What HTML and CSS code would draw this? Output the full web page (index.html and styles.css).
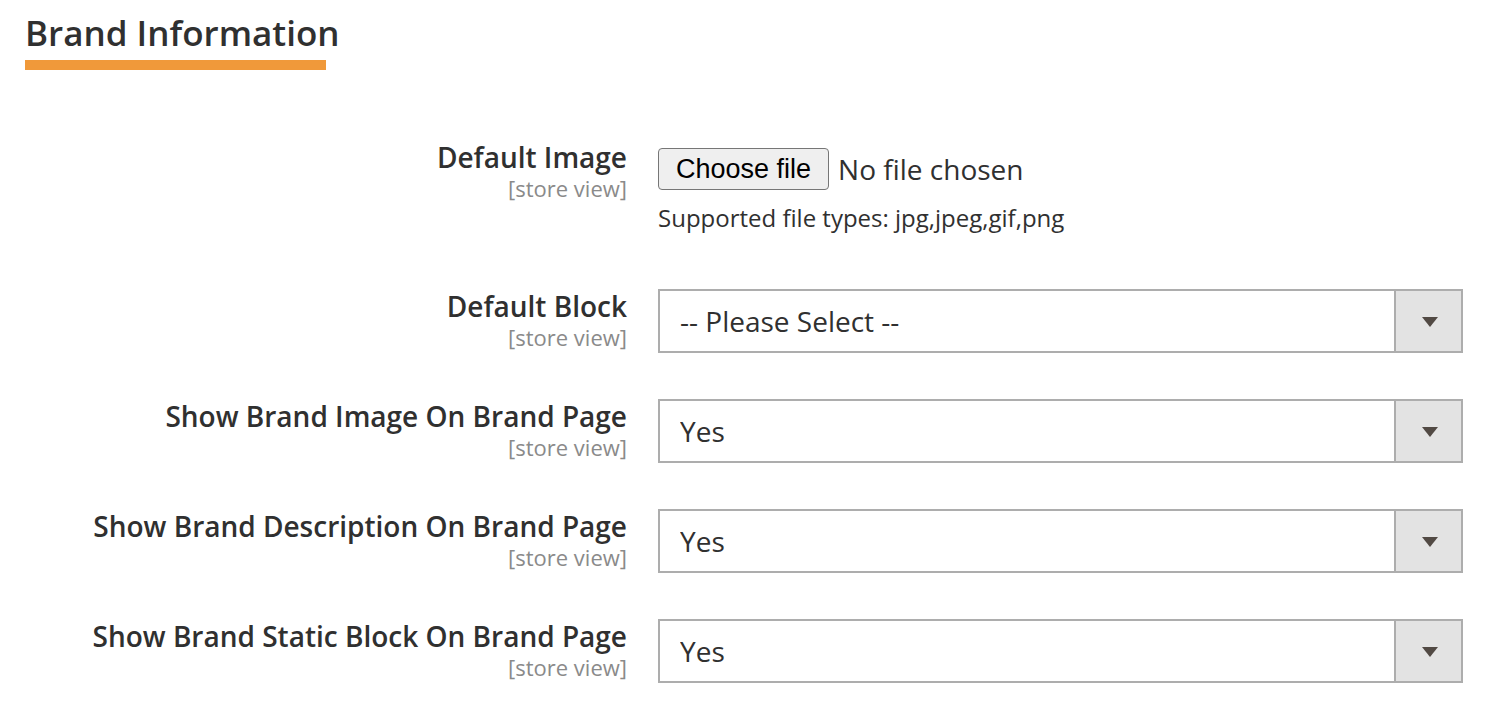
FILE: index.html
```html
<!DOCTYPE html>
<html lang="en">
<head>
    <meta charset="UTF-8">
    <meta name="viewport" content="width=device-width, initial-scale=1.0">
    <title>Brand Information</title>
    <link rel="stylesheet" href="styles.css">
</head>
<body>
    <div class="page">
        <!-- Section title -->
        <h1 class="section-title">Brand Information</h1>

        <form class="brand-form">
            <!-- Default Image -->
            <div class="field field-file">
                <div class="field-label">
                    <label for="default-image">Default Image</label>
                    <span class="scope">[store view]</span>
                </div>
                <div class="field-control">
                    <div class="file-row">
                        <input type="file" id="default-image" class="file-input">
                        <label for="default-image" class="file-button">Choose file</label>
                        <span class="file-name">No file chosen</span>
                    </div>
                    <div class="note">Supported file types: jpg,jpeg,gif,png</div>
                </div>
            </div>

            <!-- Default Block -->
            <div class="field">
                <div class="field-label">
                    <label for="default-block">Default Block</label>
                    <span class="scope">[store view]</span>
                </div>
                <div class="field-control">
                    <div class="select-wrap">
                        <select id="default-block" class="select">
                            <option>-- Please Select --</option>
                        </select>
                    </div>
                </div>
            </div>

            <!-- Show Brand Image -->
            <div class="field">
                <div class="field-label">
                    <label for="show-image">Show Brand Image On Brand Page</label>
                    <span class="scope">[store view]</span>
                </div>
                <div class="field-control">
                    <div class="select-wrap">
                        <select id="show-image" class="select">
                            <option>Yes</option>
                            <option>No</option>
                        </select>
                    </div>
                </div>
            </div>

            <!-- Show Brand Description -->
            <div class="field">
                <div class="field-label">
                    <label for="show-description">Show Brand Description On Brand Page</label>
                    <span class="scope">[store view]</span>
                </div>
                <div class="field-control">
                    <div class="select-wrap">
                        <select id="show-description" class="select">
                            <option>Yes</option>
                            <option>No</option>
                        </select>
                    </div>
                </div>
            </div>

            <!-- Show Brand Static Block -->
            <div class="field">
                <div class="field-label">
                    <label for="show-static">Show Brand Static Block On Brand Page</label>
                    <span class="scope">[store view]</span>
                </div>
                <div class="field-control">
                    <div class="select-wrap">
                        <select id="show-static" class="select">
                            <option>Yes</option>
                            <option>No</option>
                        </select>
                    </div>
                </div>
            </div>
        </form>
    </div>
</body>
</html>
```

FILE: styles.css
```css
/* Color Palette */
:root {
    --text-color: #303030;
    --scope-color: #8a8a8a;
    --accent-color: #f0993a;
    --border-color: #adadad;
    --addon-bg-color: #e3e3e3;
    --arrow-color: #514943;
}

/* General Body Style */
body {
    margin: 0;
    padding: 0;
    background-color: #ffffff;
    color: var(--text-color);
    font-family: 'Open Sans', 'Noto Sans', sans-serif;
}

.page {
    padding: 11px 27px 0 25px;
}

/* Section Title */
.section-title {
    margin: 0;
    font-size: 35px;
    font-weight: 600;
    line-height: 44px;
    color: var(--text-color);
}

.section-title::after {
    content: '';
    display: block;
    width: 301px;
    height: 10px;
    margin-top: 5px;
    background-color: var(--accent-color);
}

/* Form Layout */
.brand-form {
    margin-top: 78px;
    display: flex;
    flex-direction: column;
    gap: 46px;
}

.field {
    display: flex;
    align-items: flex-start;
    gap: 31px;
}

.field-file {
    padding-bottom: 11px;
}

.field-label {
    width: 602px;
    flex-shrink: 0;
    text-align: right;
    padding-top: 1px;
}

.field-file .field-label {
    margin-top: -8px;
}

.field-label label {
    display: block;
    font-size: 28px;
    font-weight: 600;
    line-height: 32px;
}

.scope {
    display: block;
    margin-top: 2px;
    font-size: 22px;
    line-height: 27px;
    color: var(--scope-color);
}

.field-control {
    width: 805px;
}

/* File input */
.file-row {
    display: flex;
    align-items: center;
    gap: 9px;
}

.file-input {
    position: absolute;
    width: 1px;
    height: 1px;
    opacity: 0;
    overflow: hidden;
}

.file-button {
    font-family: 'Liberation Sans', Arial, sans-serif;
    font-size: 27px;
    line-height: 30px;
    color: #000000;
    background-color: #efefef;
    border: 1px solid #767676;
    border-radius: 4px;
    padding: 5px 17px;
    cursor: pointer;
}

.file-name {
    font-size: 28px;
    line-height: 32px;
}

.note {
    margin-top: 14px;
    font-size: 24px;
    line-height: 28px;
}

/* Select with addon arrow */
.select-wrap {
    position: relative;
}

.select-wrap::before {
    content: '';
    position: absolute;
    top: 2px;
    right: 2px;
    bottom: 2px;
    width: 65px;
    background-color: var(--addon-bg-color);
    border-left: 2px solid var(--border-color);
    pointer-events: none;
}

.select-wrap::after {
    content: '';
    position: absolute;
    top: 28px;
    right: 25px;
    border-left: 8px solid transparent;
    border-right: 8px solid transparent;
    border-top: 10px solid var(--arrow-color);
    pointer-events: none;
}

.select {
    -webkit-appearance: none;
    appearance: none;
    display: block;
    width: 100%;
    height: 64px;
    margin: 0;
    padding: 0 90px 0 20px;
    font-family: 'Open Sans', 'Noto Sans', sans-serif;
    font-size: 28px;
    color: var(--text-color);
    background-color: #ffffff;
    border: 2px solid var(--border-color);
    border-radius: 0;
}
```
